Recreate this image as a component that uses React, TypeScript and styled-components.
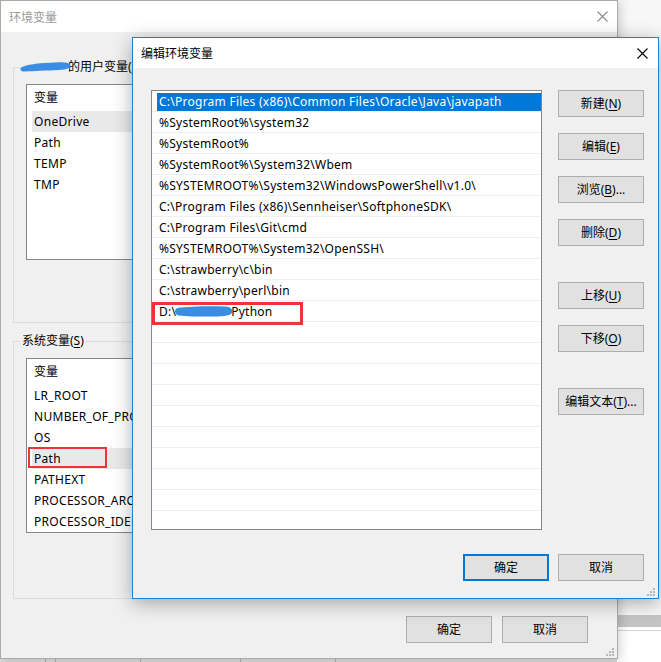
import React from 'react';
import styled, { createGlobalStyle } from 'styled-components';

const FONT = `"Noto Sans", "Noto Sans CJK SC", sans-serif`;

const Global = createGlobalStyle`
  html, body { margin: 0; padding: 0; }
  body {
    width: 661px; height: 662px; overflow: hidden; background: #fff;
    font-family: ${FONT}; font-size: 12px; color: #000;
  }
`;

const Desktop = styled.div`
  position: relative;
  width: 661px;
  height: 662px;
  overflow: hidden;
  background: #fff;
`;

/* app window visible on the far right, behind everything */
const BehindApp = styled.div`
  position: absolute;
  left: 617px;
  top: 0;
  width: 44px;
  height: 662px;
  display: flex;
  flex-direction: column;
  background: #fff;
`;
const BehindSpacer = styled.div`
  height: 615px;
  background: #f7f7f7;
`;
const BehindBar = styled.div`
  height: 12px;
  background: #c4c4c4;
`;
const BehindRow = styled.div`
  height: 14px;
  border-top: 1px solid #d4d4d4;
  margin-top: 3px;
  background: #fff;
`;

const BottomStrip = styled.div`
  position: absolute;
  left: 0;
  top: 659px;
  width: 617px;
  height: 3px;
  background: #dedede;
  display: flex;
`;
const StripCell = styled.div<{ $w: number }>`
  width: ${p => p.$w}px;
  border-right: 1px solid #b0b0b0;
  box-sizing: border-box;
`;

/* ---------- windows ---------- */
const BackWindow = styled.div`
  position: absolute;
  left: 0;
  top: 0;
  width: 618px;
  height: 659px;
  box-sizing: border-box;
  border: 1px solid #aaaaaa;
  background: #f0f0f0;
  display: flex;
  flex-direction: column;
  box-shadow: 2px 2px 10px rgba(0, 0, 0, 0.18);
`;

const FrontWindow = styled.div`
  position: absolute;
  left: 132px;
  top: 37px;
  width: 527px;
  height: 562px;
  box-sizing: border-box;
  border: 1px solid #1883d7;
  background: #f0f0f0;
  display: flex;
  flex-direction: column;
  box-shadow: 0 4px 18px rgba(0, 0, 0, 0.32);
`;

const TitleBar = styled.div<{ $h: number; $inactive?: boolean }>`
  height: ${p => p.$h}px;
  flex: none;
  background: #fff;
  display: flex;
  align-items: center;
  justify-content: space-between;
  padding-left: 8px;
  color: ${p => (p.$inactive ? '#9a9a9a' : '#000')};
  font-size: 12px;
`;

const CloseIcon = styled.svg<{ $mr: number }>`
  width: 11px;
  height: 11px;
  margin-right: ${p => p.$mr}px;
  display: block;
`;

const Close = ({ color, mr }: { color: string; mr: number }) => (
  <CloseIcon $mr={mr} viewBox="0 0 11 11">
    <path d="M0.5 0.5 L10.5 10.5 M10.5 0.5 L0.5 10.5" stroke={color} strokeWidth="1.1" fill="none" />
  </CloseIcon>
);

const GripSvg = styled.svg<{ $r: number; $b: number }>`
  position: absolute;
  right: ${p => p.$r}px;
  bottom: ${p => p.$b}px;
  width: 8px;
  height: 8px;
`;
const Grip = ({ r, b }: { r: number; b: number }) => (
  <GripSvg $r={r} $b={b} viewBox="0 0 8 8">
    {[
      [6, 0],
      [3, 3],
      [6, 3],
      [0, 6],
      [3, 6],
      [6, 6],
    ].map(([x, y], i) => (
      <rect key={i} x={x} y={y} width="2" height="2" fill="#b5b5b5" />
    ))}
  </GripSvg>
);

/* ---------- back window body ---------- */
const BackBody = styled.div`
  flex: 1;
  display: flex;
  flex-direction: column;
  padding: 27px 12px 0 12px;
  position: relative;
`;

const Group = styled.fieldset<{ $h: number; $mt?: number }>`
  margin: ${p => p.$mt ?? 0}px 0 0 0;
  height: ${p => p.$h}px;
  box-sizing: border-box;
  border: 1px solid #dcdcdc;
  padding: 9px 12px 0 12px;
  min-width: 0;
  display: flex;
  flex-direction: column;
`;

const Legend = styled.legend`
  padding: 0 2px;
  margin-left: -6px;
  font-size: 12px;
  line-height: 16px;
  color: #000;
  white-space: nowrap;
`;

const BlobSpan = styled.span<{ $w: number }>`
  display: inline-block;
  width: ${p => p.$w}px;
  height: 12px;
  vertical-align: -2px;
  position: relative;
`;
const BlobSvg = styled.svg`
  position: absolute;
  left: -3px;
  top: -2px;
  overflow: visible;
`;

const Blob = ({ w, variant }: { w: number; variant: 'a' | 'b' }) => (
  <BlobSpan $w={w}>
    {variant === 'a' ? (
      <BlobSvg width={w + 6} height={14} viewBox="0 0 52 14">
        <path
          d="M3 8 C 10 5, 22 4, 36 3.5 C 44 3, 50 3.5, 51 6 C 52 9, 48 10.5, 40 11 C 28 11.5, 14 12, 6 12.5 C 1 12.8, 0 9.5, 3 8 Z"
          fill="#3a8de2"
        />
      </BlobSvg>
    ) : (
      <BlobSvg width={w + 6} height={14} viewBox="0 0 60 14">
        <path
          d="M4 4 C 14 2.5, 34 2, 52 2.5 C 58 3, 60 6, 58 9.5 C 56 12, 48 12.5, 36 12.5 C 24 12.5, 12 12.5, 5 11.5 C 1 10.5, 0 5.5, 4 4 Z"
          fill="#3a8de2"
        />
      </BlobSvg>
    )}
  </BlobSpan>
);

const VarList = styled.div<{ $h: number }>`
  height: ${p => p.$h}px;
  flex: none;
  box-sizing: border-box;
  border: 1px solid #828790;
  background: #fff;
  overflow: hidden;
  display: flex;
  flex-direction: column;
`;

const VarHeader = styled.div`
  height: 26px;
  flex: none;
  display: flex;
  align-items: center;
  padding-left: 7px;
  line-height: 16px;
`;

const VarRow = styled.div<{ $sel?: boolean }>`
  height: 21px;
  flex: none;
  display: flex;
  align-items: center;
  margin-left: 5px;
  padding-left: 2px;
  letter-spacing: 0.3px;
  background: ${p => (p.$sel ? '#e9e9e9' : 'transparent')};
  position: relative;
  white-space: nowrap;
`;

const RedMark = styled.div<{ $l: number; $t: number; $w: number; $h: number; $b: number }>`
  position: absolute;
  left: ${p => p.$l}px;
  top: ${p => p.$t}px;
  width: ${p => p.$w}px;
  height: ${p => p.$h}px;
  box-sizing: border-box;
  border: ${p => p.$b}px solid #ee3535;
  pointer-events: none;
`;

const HiddenButtons = styled.div`
  display: flex;
  justify-content: flex-end;
  gap: 10px;
  margin-top: 9px;
`;

const Btn = styled.button<{ $def?: boolean }>`
  box-sizing: border-box;
  width: 86px;
  height: 27px;
  flex: none;
  background: #e1e1e1;
  border: ${p => (p.$def ? '2px solid #0078d7' : '1px solid #adadad')};
  border-radius: 0;
  font-family: ${FONT};
  font-size: 12px;
  color: #000;
  padding: 0;
  margin: 0;
  display: flex;
  align-items: center;
  justify-content: center;
  white-space: nowrap;
  line-height: 16px;
`;

const BackFooter = styled.div`
  display: flex;
  justify-content: flex-end;
  gap: 10px;
  margin-top: 17px;
  padding-right: 17px;
`;

/* ---------- front dialog body ---------- */
const FrontBody = styled.div`
  flex: 1;
  display: grid;
  grid-template-columns: 391px 86px;
  grid-template-rows: 440px auto;
  column-gap: 16px;
  padding: 22px 14px 0 18px;
  position: relative;
`;

const PathList = styled.div`
  box-sizing: border-box;
  border: 1px solid #828790;
  background: #fff;
  overflow: hidden;
  display: flex;
  flex-direction: column;
`;

const PathRow = styled.div<{ $sel?: boolean }>`
  height: 21px;
  flex: none;
  box-sizing: border-box;
  border-bottom: 1px solid #f0f0f0;
  display: flex;
  align-items: center;
  padding: 1px 0 0 7px;
  letter-spacing: 0.25px;
  white-space: nowrap;
  position: relative;
  color: ${p => (p.$sel ? '#fff' : '#000')};
  background: ${p =>
    p.$sel ? 'linear-gradient(#0078d7, #0078d7) 5px 2px / calc(100% - 5px) 19px no-repeat' : 'transparent'};
`;

const BtnColumn = styled.div`
  display: flex;
  flex-direction: column;
  gap: 16px;
`;

const Spaced = styled.div`
  margin-top: 20px;
`;

const FrontFooter = styled.div`
  grid-column: 1 / span 2;
  display: flex;
  justify-content: flex-end;
  gap: 9px;
  margin-top: 24px;
`;

const U = styled.span`
  text-decoration: underline;
  text-underline-offset: 2px;
`;

const userVars = ['OneDrive', 'Path', 'TEMP', 'TMP'];
const sysVars = [
  'LR_ROOT',
  'NUMBER_OF_PROCESSORS',
  'OS',
  'Path',
  'PATHEXT',
  'PROCESSOR_ARCHITECTURE',
  'PROCESSOR_IDENTIFIER',
];

const paths = [
  'C:\\Program Files (x86)\\Common Files\\Oracle\\Java\\javapath',
  '%SystemRoot%\\system32',
  '%SystemRoot%',
  '%SystemRoot%\\System32\\Wbem',
  '%SYSTEMROOT%\\System32\\WindowsPowerShell\\v1.0\\',
  'C:\\Program Files (x86)\\Sennheiser\\SoftphoneSDK\\',
  'C:\\Program Files\\Git\\cmd',
  '%SYSTEMROOT%\\System32\\OpenSSH\\',
  'C:\\strawberry\\c\\bin',
  'C:\\strawberry\\perl\\bin',
];

export default function App() {
  const empties = Array.from({ length: 10 });
  return (
    <>
      <Global />
      <Desktop>
        <BehindApp>
          <BehindSpacer />
          <BehindBar />
          <BehindRow />
        </BehindApp>
        <BottomStrip>
          <StripCell $w={46} />
          <StripCell $w={10} />
          <StripCell $w={85} />
          <StripCell $w={100} />
          <StripCell $w={95} />
        </BottomStrip>

        <BackWindow>
          <TitleBar $h={31} $inactive>
            <span>环境变量</span>
            <Close color="#8a8a8a" mr={9} />
          </TitleBar>
          <BackBody>
            <Group $h={264}>
              <Legend>
                <Blob w={46} variant="a" />
                的用户变量(<U>U</U>)
              </Legend>
              <VarList $h={176}>
                <VarHeader>变量</VarHeader>
                {userVars.map((v, i) => (
                  <VarRow key={v} $sel={i === 0}>
                    {v}
                  </VarRow>
                ))}
              </VarList>
              <HiddenButtons>
                <Btn>新建(<U>N</U>)...</Btn>
                <Btn>编辑(<U>E</U>)...</Btn>
                <Btn>删除(<U>D</U>)</Btn>
              </HiddenButtons>
            </Group>
            <Group $h={266} $mt={10}>
              <Legend>
                系统变量(<U>S</U>)
              </Legend>
              <VarList $h={175}>
                <VarHeader>变量</VarHeader>
                {sysVars.map((v, i) => (
                  <VarRow key={v} $sel={i === 3}>
                    {v}
                    {i === 3 && <RedMark $l={-4} $t={-1} $w={79} $h={21} $b={2} />}
                  </VarRow>
                ))}
              </VarList>
              <HiddenButtons>
                <Btn>新建(<U>W</U>)...</Btn>
                <Btn>编辑(<U>I</U>)...</Btn>
                <Btn>删除(<U>L</U>)</Btn>
              </HiddenButtons>
            </Group>
            <BackFooter>
              <Btn>确定</Btn>
              <Btn>取消</Btn>
            </BackFooter>
            <Grip r={3} b={2} />
          </BackBody>
        </BackWindow>

        <FrontWindow>
          <TitleBar $h={30}>
            <span>编辑环境变量</span>
            <Close color="#000" mr={10} />
          </TitleBar>
          <FrontBody>
            <PathList>
              {paths.map((p, i) => (
                <PathRow key={i} $sel={i === 0}>
                  {p}
                </PathRow>
              ))}
              <PathRow>
                D:\
                <Blob w={55} variant="b" />
                Python
                <RedMark $l={0} $t={1} $w={151} $h={23} $b={3} />
              </PathRow>
              {empties.map((_, i) => (
                <PathRow key={'e' + i} />
              ))}
            </PathList>
            <BtnColumn>
              <Btn>新建(<U>N</U>)</Btn>
              <Btn>编辑(<U>E</U>)</Btn>
              <Btn>浏览(<U>B</U>)...</Btn>
              <Btn>删除(<U>D</U>)</Btn>
              <Spaced>
                <Btn>上移(<U>U</U>)</Btn>
              </Spaced>
              <Btn>下移(<U>O</U>)</Btn>
              <Spaced>
                <Btn>编辑文本(<U>T</U>)...</Btn>
              </Spaced>
            </BtnColumn>
            <FrontFooter>
              <Btn $def>确定</Btn>
              <Btn>取消</Btn>
            </FrontFooter>
            <Grip r={3} b={2} />
          </FrontBody>
        </FrontWindow>
      </Desktop>
    </>
  );
}
